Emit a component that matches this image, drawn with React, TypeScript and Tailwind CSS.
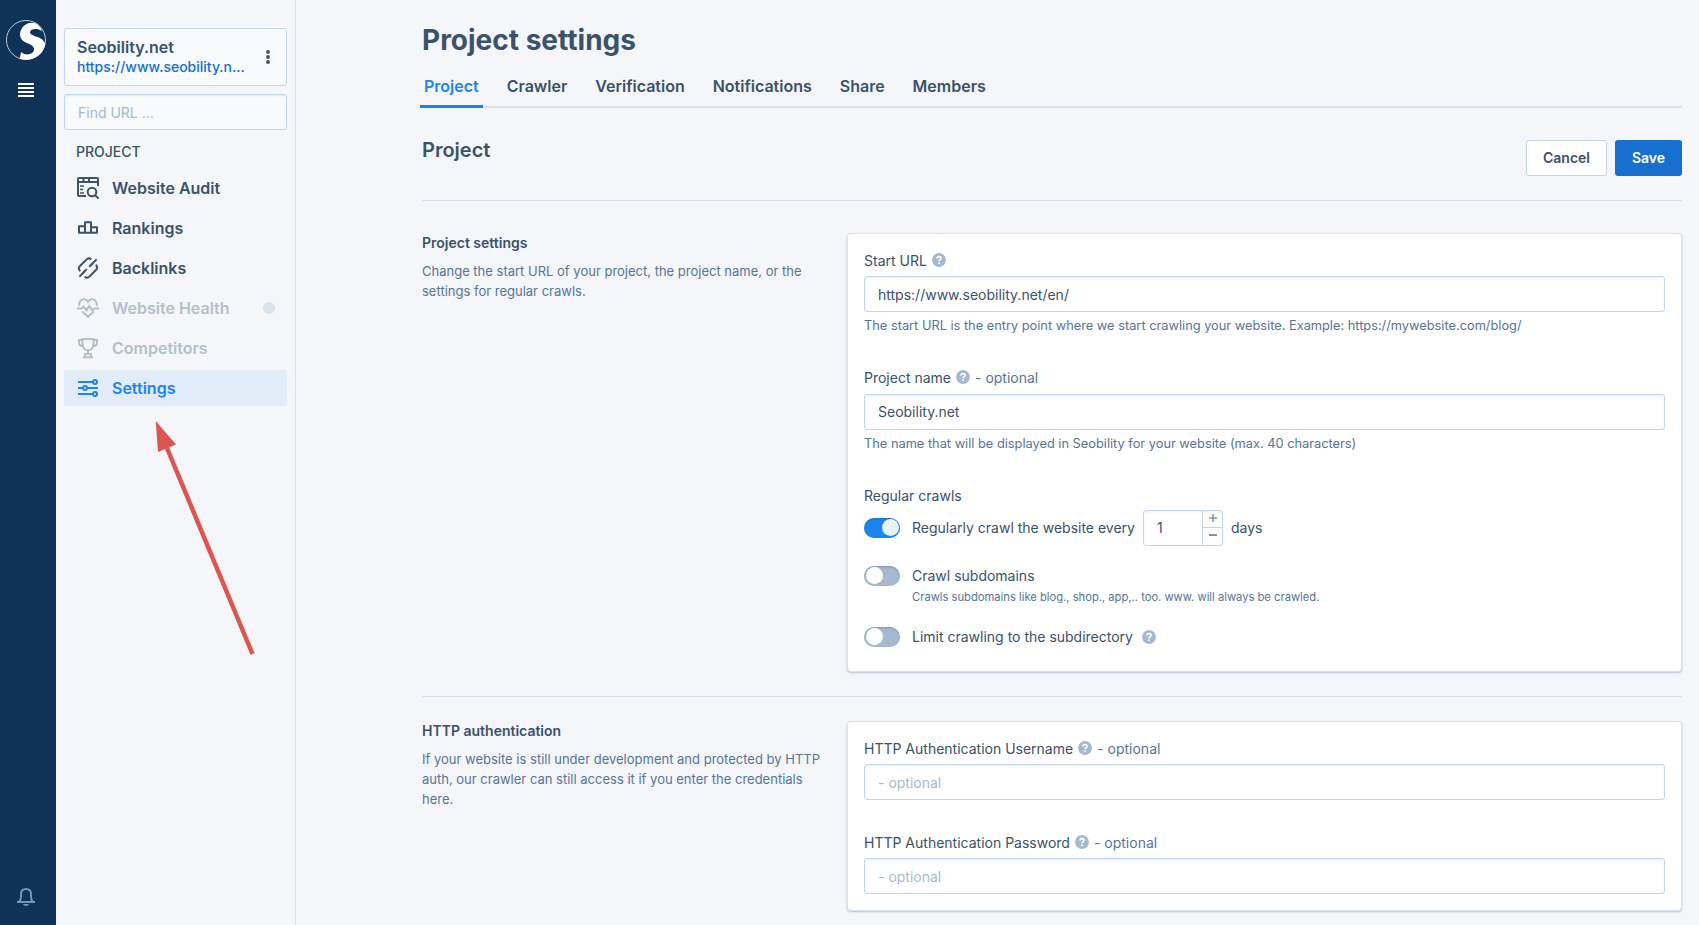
import { useState } from "react";
import type { ReactNode } from "react";
import clsx from "clsx";

type IconProps = { className?: string };

function Logo() {
  return (
    <svg viewBox="0 0 120 120" className="h-10 w-10">
      <circle cx="60" cy="60" r="58.5" fill="none" stroke="#dfe7ef" strokeWidth="2.5" />
      <path
        fill="#fff"
        d="M108 33C104 20 94 9 80 8C60 7 43 22 42 43C42 57 52 65 64 70C77 75 85 80 84 90C82 100 71 104 61 103C54 102 49 99 45 97L41 116C74 127 112 108 118 72C114 62 107 56 97 52C83 47 72 44 72 36C73 29 82 26 91 27C98 28 104 31 108 33Z"
      />
    </svg>
  );
}

function AuditIcon({ className }: IconProps) {
  return (
    <svg viewBox="0 0 24 24" fill="none" stroke="currentColor" strokeWidth="2" className={className}>
      <path d="M10 20H3a1 1 0 0 1-1-1V3a1 1 0 0 1 1-1h18a1 1 0 0 1 1 1v7M2 6h20M7.5 2v4M13 2v4" />
      <path d="M4 10h4M4 13.5h3M4 17h4" strokeWidth="1.6" />
      <circle cx="16" cy="16" r="4.3" />
      <path d="m19 19 3.6 3.6" />
    </svg>
  );
}

function RankingsIcon({ className }: IconProps) {
  return (
    <svg viewBox="0 0 24 24" fill="none" stroke="currentColor" strokeWidth="2" strokeLinejoin="round" className={className}>
      <path d="M3 10.3h6v6.5H3zM9 6.2h6v10.6H9zM15 11.3h6v5.5h-6z" />
    </svg>
  );
}

function BacklinksIcon({ className }: IconProps) {
  return (
    <svg viewBox="0 0 24 24" fill="none" stroke="currentColor" strokeWidth="2" className={className}>
      <path d="M4.3 15.2C2.4 13.5 2.4 11.6 4 10l6.4-6.4c1.6-1.6 3.4-1.5 4.9-.3M7 16.9l3.8-3.8M13.2 10.8l7.4-7.4" />
      <path d="M19.7 8.8c1.9 1.7 1.9 3.6.3 5.2l-6.4 6.4c-1.6 1.6-3.4 1.5-4.9.3M17 7.1l-2 2M3.4 20.6l5.8-5.8" />
    </svg>
  );
}

function HealthIcon({ className }: IconProps) {
  return (
    <svg viewBox="0 0 24 24" fill="none" stroke="currentColor" strokeWidth="2" className={className}>
      <path d="M3.3 10C2.6 5.8 5 3.3 7.6 3.3c2 0 3.5 1 4.4 2.5.9-1.5 2.4-2.5 4.4-2.5 2.6 0 5 2.5 4.3 6.7" />
      <path d="M1 12.6h4.5l2-2 3 3.6L13.2 10l3.2 4.4 1.9-1.8H23M6.2 15.4 12 20.8l5.8-5.4" />
    </svg>
  );
}

function TrophyIcon({ className }: IconProps) {
  return (
    <svg viewBox="0 0 24 24" fill="none" stroke="currentColor" strokeWidth="2" className={className}>
      <path d="M6.5 3h11v5c0 3.7-2.3 6.3-5.5 6.3S6.5 11.7 6.5 8zM6.5 4H3v2.5c0 2.2 1.6 3.5 4 3.9M17.5 4H21v2.5c0 2.2-1.6 3.5-4 3.9M12 14v4M7 21.2h10M9 21v-3h6v3" />
    </svg>
  );
}

function SettingsIcon({ className }: IconProps) {
  return (
    <svg viewBox="0 0 24 24" fill="none" stroke="currentColor" strokeWidth="2" className={className}>
      <path d="M2 6h15M2 12h5M11 12h11M2 18h15" />
      <circle cx="19" cy="6" r="2" />
      <circle cx="9" cy="12" r="2" />
      <circle cx="19" cy="18" r="2" />
    </svg>
  );
}

function BellIcon() {
  return (
    <svg viewBox="0 0 18 18" fill="none" stroke="currentColor" strokeWidth="2" className="h-[18px] w-[18px]">
      <path d="M0 14h18M2.5 13.5C3.8 12 4 10.5 4 8V6c0-3 2-5 5-5s5 2 5 5v2c0 2.5.2 4 1.5 5.5" />
      <path d="M6 16h6c-.5 1.3-1.5 2-3 2s-2.5-.7-3-2z" fill="currentColor" stroke="none" />
    </svg>
  );
}

function HelpIcon() {
  return (
    <svg viewBox="0 0 14 14" className="h-3.5 w-3.5 shrink-0">
      <circle cx="7" cy="7" r="6.9" fill="#a5b9d0" />
      <path d="M5 5.5C5 4.3 5.8 3.6 7 3.6s2.1.7 2.1 1.7c0 1.4-2 1.5-2 2.9" fill="none" stroke="#fff" strokeWidth="1.6" />
      <rect x="6.2" y="9.3" width="1.7" height="1.6" fill="#fff" />
    </svg>
  );
}

const navItems = [
  { label: "Website Audit", icon: AuditIcon },
  { label: "Rankings", icon: RankingsIcon },
  { label: "Backlinks", icon: BacklinksIcon },
  { label: "Website Health", icon: HealthIcon, disabled: true, dot: true },
  { label: "Competitors", icon: TrophyIcon, disabled: true },
  { label: "Settings", icon: SettingsIcon, active: true },
];

const tabs = ["Project", "Crawler", "Verification", "Notifications", "Share", "Members"];

function Sidebar() {
  return (
    <aside className="flex w-60 shrink-0 flex-col border-r border-[#d8e2ee] pt-7 pr-2 pl-2">
      <div className="flex h-[58px] items-center justify-between rounded-[3px] border border-[#c3d5e9] bg-[#f8fafc] pr-4 pl-3">
        <div>
          <div className="text-base leading-5 font-semibold">Seobility.net</div>
          <div className="text-sm leading-5 font-medium text-[#176fd0]">https://www.seobility.n...</div>
        </div>
        <svg viewBox="0 0 4 14" fill="currentColor" className="h-3.5 w-1">
          <circle cx="2" cy="2" r="1.9" />
          <circle cx="2" cy="7" r="1.9" />
          <circle cx="2" cy="12" r="1.9" />
        </svg>
      </div>
      <input
        placeholder="Find URL ..."
        className="mt-2 h-9 rounded-[3px] border border-[#c3d5e9] bg-[#f8fafc] px-[13px] text-sm shadow-[inset_0_1px_2px_#0e335514] placeholder:text-[#a5bbd2]"
      />
      <div className="mt-3 ml-3 text-sm leading-5 font-medium">PROJECT</div>
      <nav className="mt-2 flex flex-col gap-1">
        {navItems.map(({ label, icon: Icon, active, disabled, dot }) => (
          <a
            key={label}
            className={clsx(
              "flex h-9 items-center rounded-[3px] pr-3 pl-3",
              active && "bg-[#e1ecf8] text-[#1c84ee]",
              disabled && "text-[#b3c0cc]"
            )}
          >
            <Icon className="h-6 w-6 shrink-0" />
            <span className="ml-3 flex-1 text-base font-semibold">{label}</span>
            {dot && <span className="h-3 w-3 rounded-full bg-[#dae3ed]" />}
          </a>
        ))}
      </nav>
    </aside>
  );
}

function Toggle({ defaultOn = false }: { defaultOn?: boolean }) {
  const [on, setOn] = useState(defaultOn);
  return (
    <button
      onClick={() => setOn(!on)}
      className={clsx(
        "flex h-5 w-9 shrink-0 items-center rounded-full px-[1.5px] shadow-[inset_0_1px_2px_#0e335540]",
        on ? "justify-end bg-[#1c84ee]" : "justify-start bg-[#a5b9d0]"
      )}
    >
      <span className={clsx("h-[17px] w-[17px] rounded-full", on ? "bg-[#e8f3fe]" : "bg-white")} />
    </button>
  );
}

type FieldProps = {
  label: string;
  help?: string;
  value?: string;
  optional?: boolean;
};

function Field({ label, help, value, optional }: FieldProps) {
  return (
    <div>
      <label className="flex h-[20.4px] items-center text-sm">
        <span>{label}</span>
        <span className="mr-[5px] ml-[5px] -mt-0.5">
          <HelpIcon />
        </span>
        {optional && <span className="text-[#55759a]">- optional</span>}
      </label>
      <input
        defaultValue={value}
        placeholder="- optional"
        className="mt-[4.9px] block h-9 w-full rounded-[3px] border border-[#c3d5e9] bg-white px-[13px] text-sm shadow-[inset_0_1px_2px_#0e335514] placeholder:text-[#a5bbd2]"
      />
      {help && <p className="mt-1 text-[12.8px] leading-5 text-[#55759a]">{help}</p>}
    </div>
  );
}

function Section({ title, text, children }: { title: string; text: string; children: ReactNode }) {
  return (
    <section className="flex justify-between">
      <div className="w-[401px]">
        <h3 className="text-sm leading-5 font-semibold">{title}</h3>
        <p className="mt-2 text-[13px] leading-5 text-[#55759a]">{text}</p>
      </div>
      {children}
    </section>
  );
}

function Card({ className, children }: { className?: string; children: ReactNode }) {
  return (
    <div
      className={clsx(
        "w-[835px] rounded-[4px] border border-[#d8e2ee] bg-white px-4 shadow-[0_1px_2px_#0e335540]",
        className
      )}
    >
      {children}
    </div>
  );
}

export default function App() {
  const [days, setDays] = useState(1);

  return (
    <div className="relative flex h-[925px] w-[1699px] overflow-hidden bg-[#f4f6fa] font-['Inter',sans-serif] text-[#3a526b]">
      <div className="flex w-14 shrink-0 flex-col justify-between bg-[#0e3357] pt-5 pb-[19px]">
        <div className="ml-1.5 flex w-10 flex-col items-center">
          <Logo />
          <svg viewBox="0 0 16 14" fill="#fff" className="mt-[23px] h-3.5 w-4">
            <path d="M0 0h16v2H0zM0 4h16v2H0zM0 8h16v2H0zM0 12h16v2H0z" />
          </svg>
        </div>
        <div className="ml-[17px] text-[#7197bf]">
          <BellIcon />
        </div>
      </div>

      <Sidebar />

      <main className="ml-[126px] w-[1260px]">
        <h1 className="mt-[22px] text-[28px] leading-9 font-bold">Project settings</h1>
        <div className="mt-3 -ml-0.5 flex h-[38px] items-end gap-5 border-b-2 border-[#d8e2ee]">
          {tabs.map((tab, i) => (
            <a
              key={tab}
              className={clsx(
                "-mb-0.5 h-[34px] px-1 text-base leading-6 font-semibold",
                i === 0 && "border-b-3 border-[#1c84ee] text-[#1c84ee]"
              )}
            >
              {tab}
            </a>
          ))}
        </div>

        <div className="flex h-[93px] justify-between border-b border-[#d8e2ee] pt-8">
          <h2 className="-mt-1 text-xl leading-7 font-semibold">Project</h2>
          <div className="flex h-9 gap-2 text-sm font-semibold">
            <button className="w-[81px] rounded-[3px] border border-[#c3d5e9] bg-white">Cancel</button>
            <button className="w-[67px] rounded-[3px] bg-[#176fd0] text-white">Save</button>
          </div>
        </div>

        <div className="border-b border-[#d8e2ee] pt-8 pb-6">
          <Section
            title="Project settings"
            text="Change the start URL of your project, the project name, or the settings for regular crawls."
          >
            <Card className="h-[439px] pt-[17px]">
              <Field
                label="Start URL"
                value="https://www.seobility.net/en/"
                help="The start URL is the entry point where we start crawling your website. Example: https://mywebsite.com/blog/"
              />
              <div className="mt-8">
                <Field
                  label="Project name"
                  value="Seobility.net"
                  help="The name that will be displayed in Seobility for your website (max. 40 characters)"
                  optional
                />
              </div>
              <div className="mt-[32.4px] text-sm leading-5">Regular crawls</div>
              <div className="mt-1 flex h-9 items-center text-sm">
                <Toggle defaultOn />
                <span className="ml-3">Regularly crawl the website every</span>
                <div className="ml-2 flex h-9 w-20 rounded-[3px] border border-[#c3d5e9] shadow-[inset_0_1px_2px_#0e335514]">
                  <span className="flex flex-1 items-center pl-[13px]">{days}</span>
                  <div className="flex w-5 flex-col border-l border-[#c3d5e9] text-[#8496a9]">
                    <button onClick={() => setDays(days + 1)} className="flex h-[17px] items-center justify-center border-b border-[#c3d5e9] pb-0.5 pl-px">
                      <svg viewBox="0 0 8 8" className="h-2 w-2" stroke="currentColor" strokeWidth="1.6">
                        <path d="M4 0v8M0 4h8" />
                      </svg>
                    </button>
                    <button onClick={() => setDays(Math.max(1, days - 1))} className="flex h-[15px] items-center justify-center pl-px">
                      <svg viewBox="0 0 8 2" className="h-0.5 w-2" fill="currentColor">
                        <path d="M0 0h8v2H0z" />
                      </svg>
                    </button>
                  </div>
                </div>
                <span className="ml-2">days</span>
              </div>
              <div className="mt-5 flex items-start">
                <Toggle />
                <div className="ml-3">
                  <div className="text-sm leading-5">Crawl subdomains</div>
                  <div className="mt-0.5 text-[11.2px] leading-[18px] text-[#55759a]">
                    Crawls subdomains like blog., shop., app,.. too. www. will always be crawled.
                  </div>
                </div>
              </div>
              <div className="mt-[21px] flex items-center text-sm">
                <Toggle />
                <span className="mr-[9px] ml-3">Limit crawling to the subdirectory</span>
                <HelpIcon />
              </div>
            </Card>
          </Section>
        </div>

        <div className="pt-6">
          <Section
            title="HTTP authentication"
            text="If your website is still under development and protected by HTTP auth, our crawler can still access it if you enter the credentials here."
          >
            <Card className="h-[190px] pt-[17px]">
              <Field label="HTTP Authentication Username" optional />
              <div className="mt-[32.7px]">
                <Field label="HTTP Authentication Password" optional />
              </div>
            </Card>
          </Section>
        </div>
      </main>

      {/* annotation arrow pointing at the Settings entry */}
      <svg viewBox="0 0 110 240" className="absolute top-[420px] left-[150px] h-[240px] w-[110px]">
        <path d="M17 28 102.5 234" stroke="#dc554e" strokeWidth="4.5" />
        <path d="M5.7 1 26 24.5 8 32z" fill="#dc554e" />
      </svg>
    </div>
  );
}
